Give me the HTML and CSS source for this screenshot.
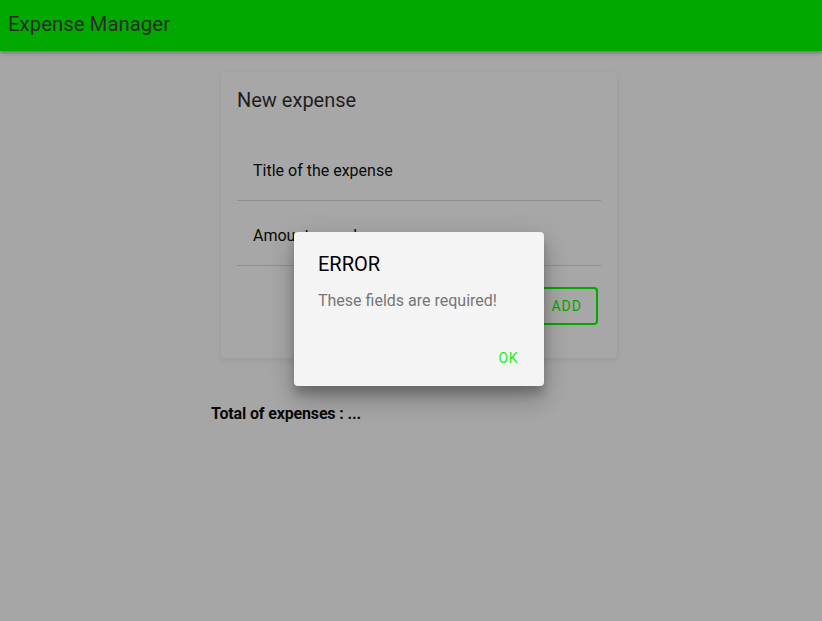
FILE: index.html
```html
<!DOCTYPE html>
<html>
<head>
<meta charset="utf-8">
<link rel="stylesheet" href="styles.css">
</head>
<body>
<header class="toolbar"><span class="toolbar-title">Expense Manager</span></header>
<main class="content">
  <div class="column">
    <section class="card">
      <h2 class="card-title">New expense</h2>
      <div class="list">
        <div class="item"><span class="placeholder">Title of the expense</span></div>
        <div class="item"><span class="placeholder">Amount spend</span></div>
      </div>
      <div class="actions"><button class="btn-outline">ADD</button></div>
    </section>
    <p class="total">Total of expenses : ...</p>
  </div>
</main>
<div class="alert">
  <h2 class="alert-title">ERROR</h2>
  <p class="alert-message">These fields are required!</p>
  <div class="alert-buttons"><button class="alert-btn">OK</button></div>
</div>
</body>
</html>
```
FILE: styles.css
```css
html, body { margin: 0; padding: 0; }
body {
  background: #a6a6a6;
  font-family: Roboto, "Noto Sans", sans-serif;
  width: 822px;
  height: 621px;
  overflow: hidden;
  position: relative;
}
.toolbar {
  height: 51px;
  background: #00a800;
  box-shadow: 0 2px 4px rgba(0,0,0,0.3);
  display: flex;
  align-items: center;
  padding: 0 0 3px 8px;
  box-sizing: border-box;
}
.toolbar-title { font-size: 20.4px; color: #2b2b2b; }
.content {
  display: flex;
  justify-content: center;
  padding-left: 16px;
  padding-top: 21px;
}
.column { width: 416px; }
.card {
  margin: 0 10px;
  background: #a7a7a7;
  border-radius: 4px;
  box-shadow: 0 2px 6px rgba(0,0,0,0.08);
  padding: 16px 16px 33px;
}
.card-title {
  margin: 0;
  font-size: 20px;
  font-weight: 400;
  line-height: 24px;
  color: #1e1e1e;
}
.list { margin-top: 24px; }
.item {
  padding: 25px 16px 19px;
  line-height: 20px;
  border-bottom: 1px solid #8f8f8f;
  font-size: 16px;
  color: #0a0a0a;
}
.actions { display: flex; justify-content: flex-end; margin-top: 21px; padding-right: 3px; }
.btn-outline {
  font-family: inherit;
  height: 38px;
  padding: 0 14px;
  background: transparent;
  border: 2px solid #00a800;
  border-radius: 4px;
  color: #00a800;
  font-size: 14px;
  letter-spacing: 1px;
}
.total {
  margin: 46px 0 0;
  font-size: 16px;
  font-weight: 700;
  letter-spacing: -0.15px;
  color: #0a0a0a;
}
.alert {
  position: absolute;
  left: 294px;
  top: 232px;
  width: 250px;
  height: 154px;
  box-sizing: border-box;
  background: #f4f4f4;
  border-radius: 4px;
  box-shadow: 0 16px 24px rgba(0,0,0,0.14), 0 6px 30px rgba(0,0,0,0.12), 0 8px 10px rgba(0,0,0,0.2);
  padding: 20px 24px 0;
}
.alert-title { margin: 0; font-size: 20px; font-weight: 400; line-height: 24px; color: #000; }
.alert-message { margin: 13px 0 0; font-size: 16px; line-height: 24px; color: #777; }
.alert-buttons { display: flex; justify-content: flex-end; margin-top: 37px; margin-right: 2px; }
.alert-btn {
  font-family: inherit;
  background: none;
  border: none;
  padding: 0;
  color: #22ee22;
  font-size: 14px;
  letter-spacing: 0.5px;
}
```
